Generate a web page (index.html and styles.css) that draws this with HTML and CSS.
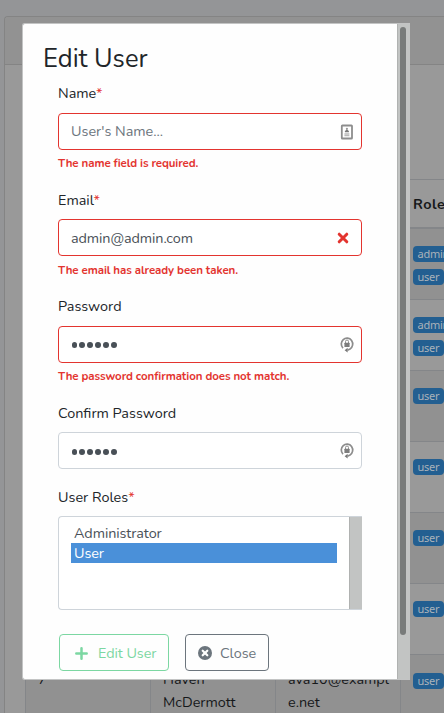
FILE: index.html
```
<!DOCTYPE html>
<html lang="en">
<head>
<meta charset="utf-8">
<title>Edit User</title>
<link rel="stylesheet" href="styles.css">
</head>
<body>
<main class="card">
  <div class="card-header"></div>
  <div class="table">
    <div class="row head"><div></div><div></div><div></div><div><span class="th">Roles</span></div></div>
    <div class="row"><div></div><div></div><div></div><div><span class="badge">admin</span><span class="badge">user</span></div></div>
    <div class="row"><div></div><div></div><div></div><div><span class="badge">admin</span><span class="badge">user</span></div></div>
    <div class="row"><div></div><div></div><div></div><div><span class="badge">user</span></div></div>
    <div class="row"><div></div><div></div><div></div><div><span class="badge">user</span></div></div>
    <div class="row"><div></div><div></div><div></div><div><span class="badge">user</span></div></div>
    <div class="row"><div></div><div></div><div></div><div><span class="badge">user</span></div></div>
    <div class="row last"><div>7</div><div>Haven<br>McDermott</div><div>ava10@exampl<br>e.net</div><div><span class="badge">user</span></div></div>
  </div>
</main>

<section class="modal">
  <div class="modal-body">
    <h4>Edit User</h4>
    <form class="form">
      <div class="group">
        <label>Name<b class="req">*</b></label>
        <div class="input invalid"><span class="placeholder">User's Name...</span>
          <svg class="card-icon" width="13" height="16" viewBox="0 0 13 16"><rect x="1.8" y="1.5" width="10.2" height="13" rx=".6" fill="#fff" stroke="#8d8d8d" stroke-width="1.8"/><circle cx="6.9" cy="4.8" r="1.1" fill="#999"/><path d="M4.9 8.2V7l2-1.6 2 1.6v1.2z" fill="#777"/><path d="M4.4 10h5M4.4 11.6h5" stroke="#bbb" stroke-width="1.4"/></svg>
        </div>
        <div class="error">The name field is required.</div>
      </div>
      <div class="group">
        <label>Email<b class="req">*</b></label>
        <div class="input invalid"><span class="email">admin@admin.com</span>
          <svg class="times" width="12" height="12" viewBox="0 0 12 12"><path d="M2.2 2.2l7.6 7.6M9.8 2.2L2.2 9.8" stroke="#e3342f" stroke-width="3" stroke-linecap="round"/></svg>
        </div>
        <div class="error">The email has already been taken.</div>
      </div>
      <div class="group">
        <label>Password</label>
        <div class="input invalid"><span class="dots"><i></i><i></i><i></i><i></i><i></i><i></i></span>
          <svg class="lock-icon" width="14" height="17" viewBox="0 0 14 17"><path d="M3 12.2A5.7 5.9 0 1 1 10 13L7.5 14.2" fill="none" stroke="#8d8d8d" stroke-width="1.7"/><path d="M7.6 11.8v4.8L4.6 14.2z" fill="#777"/><rect x="4.4" y="6.7" width="5.2" height="4.2" rx=".5" fill="#7d7d7d"/><path d="M5.5 7V5.5a1.5 1.5 0 0 1 3 0V7" fill="none" stroke="#8d8d8d"/></svg>
        </div>
        <div class="error">The password confirmation does not match.</div>
      </div>
      <div class="group">
        <label>Confirm Password</label>
        <div class="input"><span class="dots"><i></i><i></i><i></i><i></i><i></i><i></i></span>
          <svg class="lock-icon" width="14" height="17" viewBox="0 0 14 17"><path d="M3 12.2A5.7 5.9 0 1 1 10 13L7.5 14.2" fill="none" stroke="#8d8d8d" stroke-width="1.7"/><path d="M7.6 11.8v4.8L4.6 14.2z" fill="#777"/><rect x="4.4" y="6.7" width="5.2" height="4.2" rx=".5" fill="#7d7d7d"/><path d="M5.5 7V5.5a1.5 1.5 0 0 1 3 0V7" fill="none" stroke="#8d8d8d"/></svg>
        </div>
      </div>
      <div class="group">
        <label>User Roles<b class="req">*</b></label>
        <div class="select">
          <div class="options">
            <div class="option">Administrator</div>
            <div class="option selected">User</div>
          </div>
          <div class="select-bar"></div>
        </div>
      </div>
      <div class="actions">
        <button type="button" class="btn save"><svg width="13" height="13" viewBox="0 0 13 13"><path d="M6.5 1.3v10.4M1.3 6.5h10.4" stroke="currentColor" stroke-width="2.5" stroke-linecap="round"/></svg><span>Edit User</span></button>
        <button type="button" class="btn close"><svg width="14" height="14" viewBox="0 0 14 14"><circle cx="7" cy="7" r="7" fill="currentColor"/><path d="M4.7 4.7l4.6 4.6M9.3 4.7L4.7 9.3" stroke="#fff" stroke-width="2.2" stroke-linecap="round"/></svg><span>Close</span></button>
      </div>
    </form>
  </div>
  <div class="scrollbar"><div class="thumb"></div></div>
</section>
</body>
</html>
```
FILE: styles.css
```
* { box-sizing: border-box; }
body {
  margin: 0;
  height: 713px;
  overflow: hidden;
  background: #949597;
  color: #16181a;
  font: 14.4px/23px Nunito, Lato, sans-serif;
  position: relative;
}
.card {
  margin: 16px 0 0 4px;
  height: 697px;
  overflow: hidden;
  background: #999;
  border: 1px solid #848484;
  border-width: 1px 0 0 1px;
  border-radius: 4px 0 0 0;
}
.card-header { height: 48px; background: #929292; border-bottom: 1px solid #848484; }
.table { margin: 114px 0 0 20px; border-left: 1px solid #848689; }
.row {
  display: grid;
  grid-template-columns: 125px 125px 125px minmax(0, 1fr);
  height: 71px;
  border-top: 1px solid #848689;
}
.row:nth-child(even) { background: #919191; }
.row.head { height: 50px; border-bottom: 2px solid #848689; }
.row.head + .row { height: 70px; border-top: 0; }
.row > div { padding: 12px; border-right: 1px solid #848689; }
.row > div:last-child { padding-right: 0; border-right: 0; overflow: hidden; }
.row.head > div { padding-top: 13px; }
.row.last > div { padding-top: 13px; }
.th { font-weight: 700; letter-spacing: .5px; }
.badge {
  display: block;
  width: max-content;
  height: 16px;
  margin: 5px 0 7px;
  padding: 0 4.5px;
  border-radius: 4px;
  background: #235f91;
  color: #a9b2ba;
  font: 11px/16px "Noto Sans", sans-serif;
  letter-spacing: -.25px;
}
.modal {
  position: absolute;
  left: 22px;
  top: 23px;
  width: 388px;
  height: 657px;
  display: flex;
  background: #fefefe;
  border: 1px solid #c3c4c4;
  border-right: 0;
  border-radius: 3px 0 0 3px;
  overflow: hidden;
  color: #212529;
}
.modal-body { flex: 1; padding: 17px 0 0 20px; }
.scrollbar { width: 13px; padding: 3px 4px 0 2px; background: #c2c4c3; border-left: 1px solid #b0b2b1; }
.thumb { height: 608px; border-radius: 3px; background: #787b7a; }
h4 { margin: 0; height: 41px; padding-top: 1px; font-size: 25.5px; line-height: 34px; font-weight: 400; }
.form { margin-left: 15px; width: 304px; }
.group { margin-bottom: 16px; }
label { display: block; height: 23px; margin-bottom: 8px; line-height: 24px; }
.group:nth-child(1) label, .group:nth-child(3) label { line-height: 22px; }
.req { color: #e3342f; font-weight: 400; }
.input {
  display: flex;
  align-items: center;
  justify-content: space-between;
  height: 37px;
  padding: 0 7px 0 12px;
  border: 1px solid #ced4da;
  border-radius: 4px;
  background: #fff;
  color: #495057;
  letter-spacing: -.08px;
}
.invalid { border-color: #e3342f; }
.placeholder { color: #6c757d; letter-spacing: 0; }
.email { padding-top: 2px; }
.card-icon { margin-right: 1px; }
.times { margin-right: 5px; }
.error { height: 18.4px; margin-top: 4px; font-size: 11.52px; line-height: 19px; font-weight: 700; letter-spacing: -.09px; color: #e3342f; }
.group:nth-child(2) .error { line-height: 20px; }
.dots { display: flex; gap: 2.2px; padding: 2px 0 0 .5px; }
.dots i { width: 5.8px; height: 5.8px; border-radius: 50%; background: #495057; }
.select { display: flex; height: 94px; border: 1px solid #ced4da; border-right: 0; border-radius: 4px 0 0 4px; background: #fff; color: #495057; }
.options { flex: 1; padding: 6px 12px; }
.option { height: 20px; padding-left: 3px; line-height: 20px; letter-spacing: -.08px; }
.selected { background: #4a90d9; color: #fff; }
.select-bar { width: 13px; background: #c2c4c3; border-left: 1px solid #b0b2b1; }
.actions { display: flex; gap: 16px; margin: 24px 0 0 1px; }
.btn { display: flex; align-items: center; height: 37px; padding: 1px 0 0; border: 1px solid; border-radius: 4px; background: transparent; font: inherit; letter-spacing: -.08px; }
.save { width: 110px; padding-left: 15px; gap: 10px; color: #7cd7a2; }
.close { width: 84px; padding-left: 12px; gap: 8px; color: #6c757d; }
```
